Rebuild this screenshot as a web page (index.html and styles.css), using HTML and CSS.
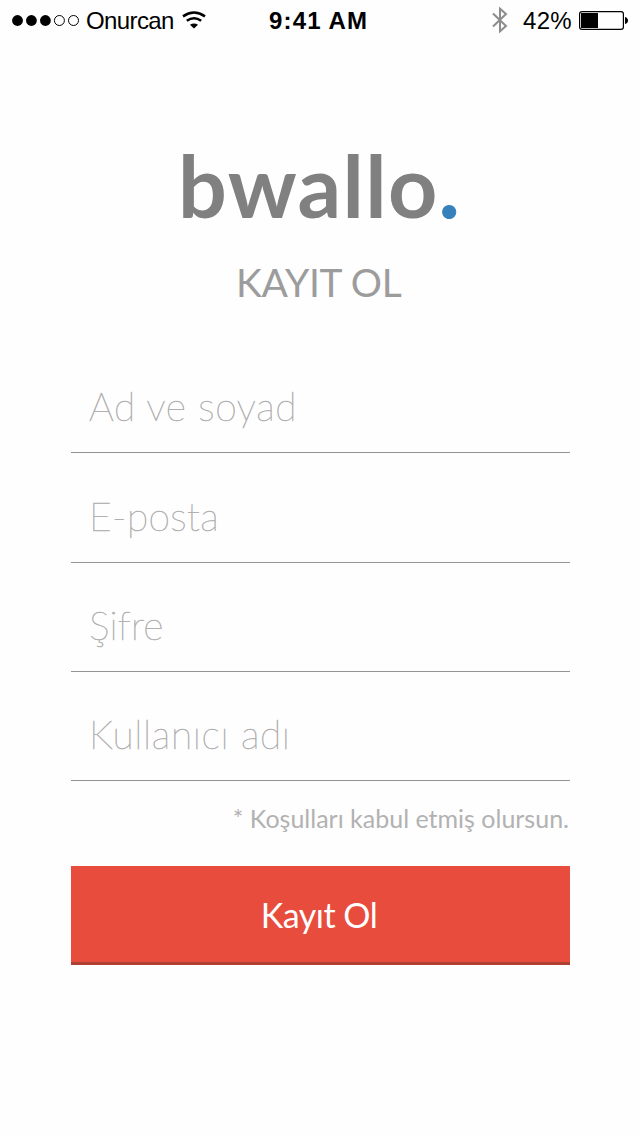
FILE: index.html
```html
<!DOCTYPE html>
<html lang="tr">
<head>
<meta charset="utf-8">
<title>bwallo</title>
<link rel="stylesheet" href="styles.css">
</head>
<body>
<header class="status">
  <div class="status-left">
    <svg class="signal" width="68" height="12" viewBox="0 0 68 12">
      <circle cx="5.5" cy="6.5" r="5.4"/><circle cx="19.4" cy="6.5" r="5.4"/><circle cx="33.4" cy="6.5" r="5.4"/>
      <circle class="hollow" cx="47.4" cy="6.5" r="5"/><circle class="hollow" cx="61.5" cy="6.5" r="5"/>
    </svg>
    <span class="carrier">Onurcan</span>
    <svg class="wifi" width="24" height="18" viewBox="0 0 24 18">
      <path class="arc" d="M1 5.4Q12 -2.2 23 5.4M4.8 9.8Q12 4.6 19.2 9.8"/>
      <path d="M8 13.8Q12 11 16 13.8L12 17.6Z"/>
    </svg>
  </div>
  <span class="clock">9:41 AM</span>
  <div class="status-right">
    <svg class="bluetooth" width="16" height="26" viewBox="0 0 16 26">
      <path d="M1 6.5L14 19L8 24.3V1.7L14 7L1 19.5"/>
    </svg>
    <span class="percent">42%</span>
    <svg class="battery" width="50" height="19" viewBox="0 0 50 19">
      <rect class="shell" x=".6" y=".6" width="43.8" height="17.8" rx="2.4"/>
      <rect x="2" y="2" width="17" height="15"/>
      <path d="M46 6Q49 7 49 9.5T46 13Z"/>
    </svg>
  </div>
</header>
<main class="signup">
  <h1 class="logo">bwallo<span class="dot">.</span></h1>
  <h2 class="title">KAYIT OL</h2>
  <div class="fields">
    <div class="field name">Ad ve soyad</div>
    <div class="field mail">E-posta</div>
    <div class="field pass">Şifre</div>
    <div class="field user">Kullanıcı adı</div>
  </div>
  <p class="terms">* Koşulları kabul etmiş olursun.</p>
  <button class="submit" type="button">Kayıt Ol</button>
</main>
</body>
</html>
```

FILE: styles.css
```css
* { box-sizing: border-box; }
body {
  margin: 0;
  height: 1136px;
  overflow: hidden;
  background: #fefefe;
  font-family: Lato, "Open Sans", sans-serif;
}
svg { display: block; flex: none; }

.status {
  display: grid;
  grid-template-columns: 269px 1fr 148px;
  height: 40px;
  font: 24px/42px "Liberation Sans", Arial, sans-serif;
  color: #000;
  white-space: nowrap;
}
.status-left, .status-right { display: flex; align-items: center; height: 40px; }
.status-left { padding-left: 12px; }
.signal .hollow { fill: none; stroke: #000; stroke-width: 1; }
.carrier { width: 90px; margin-left: 6px; padding-top: 2px; letter-spacing: -.6px; }
.wifi { margin-left: 6px; }
.wifi .arc { fill: none; stroke: #000; stroke-width: 2.5; }
.clock { font-weight: bold; letter-spacing: 1.15px; }
.bluetooth path { fill: none; stroke: #8c8c8c; stroke-width: 2; }
.percent { width: 50px; margin-left: 15px; padding-top: 2px; letter-spacing: .3px; }
.battery { margin-left: 6px; margin-top: 1px; }
.battery .shell { fill: none; stroke: #000; stroke-width: 1.2; }

.signup { display: flex; flex-direction: column; padding: 0 70px 0 71px; }
.logo {
  margin: 95px 0 0 107px;
  font-size: 86px;
  line-height: 100px;
  font-weight: 700;
  letter-spacing: 1.4px;
  color: #808080;
  white-space: nowrap;
}
.dot { color: #3781bb; -webkit-text-stroke: 1px #3781bb; }
.title {
  margin: 23px 0 0;
  padding-left: 165px;
  font-size: 39px;
  line-height: 48px;
  font-weight: 400;
  letter-spacing: -.3px;
  color: #9c9c9c;
}
.fields { margin-top: 37px; }
.field {
  display: flex;
  align-items: flex-end;
  height: 109px;
  padding: 0 0 22px 18px;
  border-bottom: 1px solid #949494;
  font-size: 39px;
  line-height: 48px;
  font-weight: 200;
  color: #b0b0b0;
  -webkit-text-stroke: .6px #b0b0b0;
}
.field:nth-child(-n+2) { height: 110px; }
.name { letter-spacing: .6px; }
.mail { letter-spacing: .4px; }
.pass { letter-spacing: .2px; }
.user { letter-spacing: .65px; }
.terms {
  margin: 21px 0 0;
  padding-right: 1px;
  text-align: right;
  font-size: 25px;
  line-height: 32px;
  color: #b2b2b2;
}
.submit {
  height: 99px;
  margin-top: 32px;
  padding: 2px 3px 0 0;
  border: 0;
  border-bottom: 3px solid #b14034;
  background: #e84c3d;
  font: 400 34px/94px Lato, "Open Sans", sans-serif;
  letter-spacing: -.5px;
  color: #fff;
}
```
